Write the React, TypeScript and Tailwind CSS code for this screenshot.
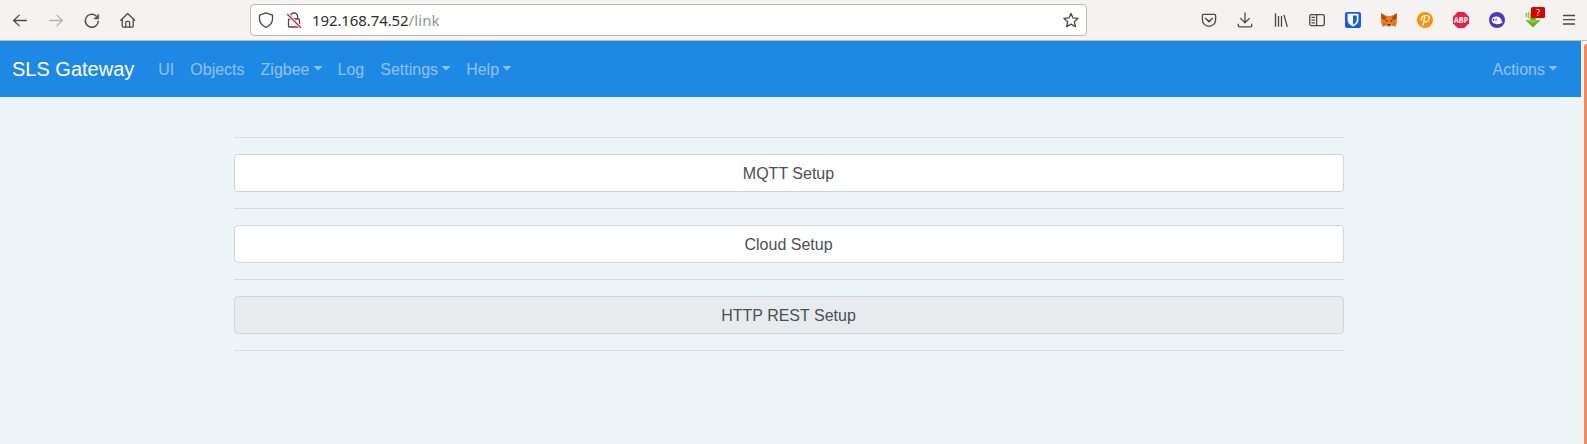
import type { ReactNode } from "react";

function Icon({ children, className = "text-[#4b4a48]" }: { children: ReactNode; className?: string }) {
  return (
    <svg
      viewBox="0 0 16 16"
      className={`h-4 w-4 shrink-0 overflow-visible ${className}`}
      fill="none"
      stroke="currentColor"
      strokeWidth="1.3"
      strokeLinecap="round"
      strokeLinejoin="round"
    >
      {children}
    </svg>
  );
}

function Toolbar() {
  return (
    <header className="flex h-[41px] items-center border-b border-[#bfbbb6] bg-[#f4f3f1] pr-[10px] pl-3">
      <div className="flex w-[238px] gap-5">
        <Icon><path d="M14.4 8.5H1.6M7.2 3.1 1.6 8.5l5.6 5.4" /></Icon>
        <Icon className="text-[#b5b4b2]"><path d="M1.6 8.5h12.8M8.8 3.1l5.6 5.4-5.6 5.4" /></Icon>
        <Icon>
          <path d="M14.3 9.2A6.5 6.5 0 1 1 11.9 3.7" strokeWidth="1.4" />
          <path d="M14.7 2.3v4.6h-4.6z" fill="currentColor" strokeWidth=".5" />
        </Icon>
        <Icon>
          <path d="M.8 8.2 7.7 1.5 14.6 8.2M2.2 7v7.1a1 1 0 0 0 1 1h9a1 1 0 0 0 1-1V7" />
          <path d="M5.8 15V10.3c0-.6.4-1 1-1h1.8c.6 0 1 .4 1 1V15" />
        </Icon>
      </div>
      <div className="flex h-8 w-[837px] items-center rounded-[4px] border border-[#bdbab6] bg-white px-[7px]">
        <Icon><path d="M8 .9 14.5 3.2v3.7c0 3.5-2.4 6.5-6.5 8.5C3.9 13.4 1.5 10.4 1.5 6.9V3.2z" /></Icon>
        <div className="ml-3 flex">
          <Icon>
            <path d="M4.4 7V4.6a3.6 3.6 0 0 1 7.2 0V7M3.5 7h9a1 1 0 0 1 1 1v6a1 1 0 0 1-1 1h-9a1 1 0 0 1-1-1V8a1 1 0 0 1 1-1z" />
            <path d="M1.6 2.4 14.6 15.4" stroke="#fff" strokeWidth="3.2" />
            <path d="M1.6 2.4 14.6 15.4" stroke="#e5194f" strokeWidth="1.4" />
          </Icon>
        </div>
        <span className="mb-px ml-[10px] flex-1 font-['Noto_Sans',sans-serif] text-[15px] leading-5 tracking-[-0.1px] text-[#2e2e2e]">
          192.168.74.52<span className="tracking-[0.1px] text-[#929292]">/link</span>
        </span>
        <Icon><path d="m8 1.4 2 4.5 5 .5-3.7 3.3 1.1 4.9L8 12.1l-4.4 2.5 1.1-4.9L1 6.4l5-.5z" /></Icon>
      </div>
      <div className="ml-auto flex gap-5">
        <Icon>
          <path d="M2.6 2.4h10.8c.7 0 1.2.5 1.2 1.2v4.1a6.6 6.6 0 0 1-13.2 0V3.6c0-.7.5-1.2 1.2-1.2z" />
          <path d="M4.7 6.5 8 9.6l3.3-3.1" strokeWidth="1.5" />
        </Icon>
        <Icon><path d="M8 .9v9.6M3.6 6.4 8 10.7l4.4-4.3M1.3 12.2v1.3c0 .7.6 1.3 1.3 1.3h10.8c.7 0 1.3-.6 1.3-1.3v-1.3" /></Icon>
        <Icon><path d="M2.5 1.2v13.6M5.5 4v10.8M8.5 4v10.8M11 2.8l3.3 12" strokeLinecap="butt" /></Icon>
        <Icon>
          <rect x=".8" y="2.6" width="14.5" height="11" rx="1.6" />
          <path d="M7.6 2.6v11M3 5.4h2.4M3 8.1h2.4M3 10.8h2.4" />
        </Icon>
        <Icon>
          <rect width="16" height="16" rx="2" fill="#175ddc" stroke="none" />
          <path d="M2.6 1.8h10.8v6.5c0 2.9-2.9 5-5.4 6.2-2.5-1.2-5.4-3.3-5.4-6.2z" fill="#fff" stroke="none" />
          <path d="M8 3.4h3.8v4.9c0 1.8-1.7 3.3-3.8 4.4z" fill="#175ddc" stroke="none" />
        </Icon>
        <Icon>
          <g stroke="none">
            <path d="M0 1.2 6.2 4h3.6L16 1.2 15.6 6l.4 4-1.5 4.6-4-1L9 15H7l-1.5-1.4-4 1L0 10l.4-4z" fill="#ef7f20" />
            <path d="M0 1.2 5.5 5.5 3.8 8.2.4 7zM16 1.2l-5.5 4.3 1.7 2.7 3.4-1.2z" fill="#a64c16" />
            <path d="M1 10h3.6l.9 3.6-4 1zM15 10h-3.6l-.9 3.6 4 1z" fill="#e2711c" />
            <path d="M4 8.6 6.4 8l.3 2.1zM12 8.6 9.6 8l-.3 2.1z" fill="#3a3635" />
            <path d="m5.5 12.7 1.2-.6h2.6l1.2.6-.3 2.5H5.8z" fill="#d4c2b2" />
            <path d="M6.7 11.9h2.6l.4 1.7H6.3z" fill="#282223" />
          </g>
        </Icon>
        <Icon>
          <circle cx="8" cy="8" r="8" fill="#ff9100" stroke="none" />
          <path d="M7.7 5.2 6 13M4.4 8.2C2.9 3.8 12 1.1 12.2 6c.1 3.2-3.2 4.8-5.2 3.4" stroke="#fff" strokeWidth="1.4" />
        </Icon>
        <Icon>
          <path d="M4.7 0h6.6L16 4.7v6.6L11.3 16H4.7L0 11.3V4.7z" fill="#ed1e45" stroke="none" />
          <text x="8" y="11.1" textAnchor="middle" textLength="14" lengthAdjust="spacingAndGlyphs" fill="#fff" stroke="none" className="font-['Open_Sans',sans-serif] text-[8.4px] font-bold">ABP</text>
        </Icon>
        <Icon>
          <circle cx="8" cy="8" r="8" fill="#4e3ab8" stroke="none" />
          <path d="M2.6 7.8C2.7 5.7 4.8 4.4 7.3 4.4c3.1 0 4.9 2.1 5.3 4.3.2.9.5 1.3.9 1.6-.4 1-1.2 1.3-1.8.9-.5.9-1.5 1.2-2.3.5-.8.8-2 .8-2.7.1-2.2.2-4.1-1.6-4.1-4z" fill="#fff" stroke="none" />
          <path d="M4.4 7.1v1.2M7 7.1v1.2" stroke="#39298c" strokeWidth="1.2" />
        </Icon>
        <div className="relative h-4 w-4">
          <Icon>
            <path d="M5.2 1h5.6v7H15.6l-7.6 7.6L.4 8h4.8z" fill="#6eab22" stroke="none" />
            <path d="M1.3 1v4M3.5 0v6.5" stroke="#92cb3c" strokeWidth="1.5" strokeLinecap="butt" />
            <path d="M.8 7.9h14.4L8 11.6z" fill="#8fc63d" stroke="none" />
          </Icon>
          <span className="absolute -top-[5px] left-[6px] flex h-[11px] w-[14px] items-center justify-center rounded-[1.5px] bg-[#d90000] font-['Noto_Sans',sans-serif] text-[9.5px] leading-none text-white">?</span>
        </div>
        <Icon><path d="M2 3.5h12M2 7.7h12M2 12h12" strokeLinecap="butt" /></Icon>
      </div>
    </header>
  );
}

function NavLink({ label, menu = false }: { label: string; menu?: boolean }) {
  return (
    <a className="block px-2 pt-[9px] pb-[7px] whitespace-nowrap text-white/50">
      {label}
      {menu && (
        <svg viewBox="0 0 8 5" className="ml-[4.08px] inline-block h-[5px] w-2 align-[4px]" fill="currentColor">
          <path d="M0 0h8v.6L4 4.6 0 .6z" />
        </svg>
      )}
    </a>
  );
}

const links = [
  { label: "UI" },
  { label: "Objects" },
  { label: "Zigbee", menu: true },
  { label: "Log" },
  { label: "Settings", menu: true },
  { label: "Help", menu: true },
];

const sections = [
  { label: "MQTT Setup", fill: "bg-white" },
  { label: "Cloud Setup", fill: "bg-white" },
  { label: "HTTP REST Setup", fill: "bg-[#e8ebee]" },
];

export default function App() {
  return (
    <div className="flex h-[444px] flex-col overflow-hidden bg-[#ecf4f8] font-['Liberation_Sans',Arial,sans-serif] text-base">
      <Toolbar />
      <div className="flex flex-1">
        <div className="w-[1581px]">
          <nav className="flex h-14 items-center bg-[#1e88e5] pr-4 pl-3">
            <a className="mr-4 text-xl leading-[30px] whitespace-nowrap text-white">SLS Gateway</a>
            <div className="flex">
              {links.map((link) => <NavLink key={link.label} {...link} />)}
            </div>
            <div className="ml-auto"><NavLink label="Actions" menu /></div>
          </nav>
          <main className="ml-[234px] w-[1110px] pt-10">
            <hr className="border-[#d4dbdf]" />
            {sections.map(({ label, fill }) => (
              <div key={label}>
                <button className={`my-4 block h-[38px] w-full rounded-[4px] border border-[#ced4da] pt-0.5 pr-px text-[#495057] ${fill}`}>
                  {label}
                </button>
                <hr className="border-[#d4dbdf]" />
              </div>
            ))}
          </main>
        </div>
        <div className="mt-[3px] ml-[3px] flex-1 rounded-tl-[3px] bg-[#f08763]" />
      </div>
    </div>
  );
}
